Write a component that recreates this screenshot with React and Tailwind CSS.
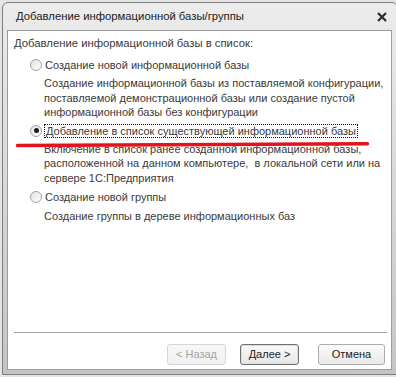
import React from "react";

const Radio = ({ checked }) => (
  <span className="w-[12px] h-[12px] rounded-full border border-[#a3a3a3] bg-gradient-to-br from-[#e2e2e2] to-[#ffffff] flex items-center justify-center shrink-0">
    {checked && <span className="w-[5px] h-[5px] rounded-full bg-[#1a1a1a]" />}
  </span>
);

const Button = ({ children, disabled, primary, className }) => (
  <div
    className={
      "h-[21px] rounded-[3px] border flex items-center justify-center bg-gradient-to-b " +
      (disabled
        ? "border-[#d6d6d6] from-[#f7f7f7] to-[#f1f1f1] text-[#a3a3a3] "
        : primary
        ? "border-[#6f6f6f] from-[#fafafa] to-[#e6e6e6] text-[#222] shadow-[inset_0_0_0_1px_#dedede] "
        : "border-[#acacac] from-[#fbfbfb] to-[#e9e9e9] text-[#222] ") +
      className
    }
  >
    {children}
  </div>
);

const App = () => {
  return (
    <div
      className="relative w-[396px] h-[377px] overflow-hidden bg-[#e4e4e4] pt-[2px] pl-[2px] text-[11px] whitespace-nowrap"
      style={{ fontFamily: '"Liberation Sans", Arial, sans-serif' }}
    >
      {/* Window frame */}
      <div className="w-[396px] h-[373px] rounded-t-[6px] border border-[#7e7e7e] bg-gradient-to-b from-[#ececec] via-[#d8d8d8] to-[#c4c4c4] flex flex-col pl-[4px] pr-[5px] pb-[4px]">
        {/* Title bar */}
        <div className="h-[27px] flex items-center justify-between pl-[9px] pr-[3px] shrink-0">
          <span className="text-[#1c1c1c] leading-none text-[11.3px]">
            Добавление информационной базы/группы
          </span>
          <svg width="12" height="12" viewBox="0 0 12 12" className="mr-[1px]">
            <path d="M2 2 L10 10 M10 2 L2 10" stroke="#2b2b2b" strokeWidth="2.2" />
          </svg>
        </div>

        {/* Client area */}
        <div className="flex-1 bg-white border border-[#9c9c9c] flex flex-col text-[#3a3a3a]">
          <div className="pl-[6px] mt-[5px] leading-[14px] text-[11.3px]">
            Добавление информационной базы в список:
          </div>

          <div className="flex items-center gap-[2px] pl-[22px] mt-[8px] leading-[14px]">
            <Radio />
            <span className="px-[1px]">Создание новой информационной базы</span>
          </div>
          <div className="pl-[36px] mt-[4px] leading-[14.5px]">
            Создание информационной базы из поставляемой конфигурации,
            <br />
            поставляемой демонстрационной базы или создание пустой
            <br />
            информационной базы без конфигурации
          </div>

          <div className="flex items-center gap-[2px] pl-[22px] mt-[4px] leading-[12px]">
            <Radio checked />
            <span className="px-[1px] border border-dotted border-[#111]">
              Добавление в список существующей информационной базы
            </span>
          </div>
          <div className="pl-[36px] mt-[4px] leading-[14.5px]">
            Включение в список ранее созданной информационной базы,
            <br />
            расположенной на данном компьютере,&nbsp; в локальной сети или на
            <br />
            сервере 1С:Предприятия
          </div>

          <div className="flex items-center gap-[2px] pl-[22px] mt-[5px] leading-[14px]">
            <Radio />
            <span className="px-[1px]">Создание новой группы</span>
          </div>
          <div className="pl-[36px] mt-[5px] leading-[14px]">
            Создание группы в дереве информационных баз
          </div>

          <div className="flex-1" />

          <div className="ml-[6px] mr-[4px] h-px bg-[#a0a0a0]" />
          <div className="flex items-center mt-[11px] mb-[4px] pr-[6px] justify-end">
            <Button disabled className="w-[59px]">
              &lt; Назад
            </Button>
            <Button primary className="w-[59px] ml-[14px]">
              Далее &gt;
            </Button>
            <Button className="w-[67px] ml-[19px]">Отмена</Button>
          </div>
        </div>
      </div>

      {/* Red annotation line */}
      <svg
        className="absolute left-0 top-0 pointer-events-none"
        width="396"
        height="377"
      >
        <path
          d="M17.5 145.5 L367.5 143.8"
          stroke="#e3121c"
          strokeWidth="3.4"
          strokeLinecap="round"
        />
      </svg>
    </div>
  );
};

export default App;
